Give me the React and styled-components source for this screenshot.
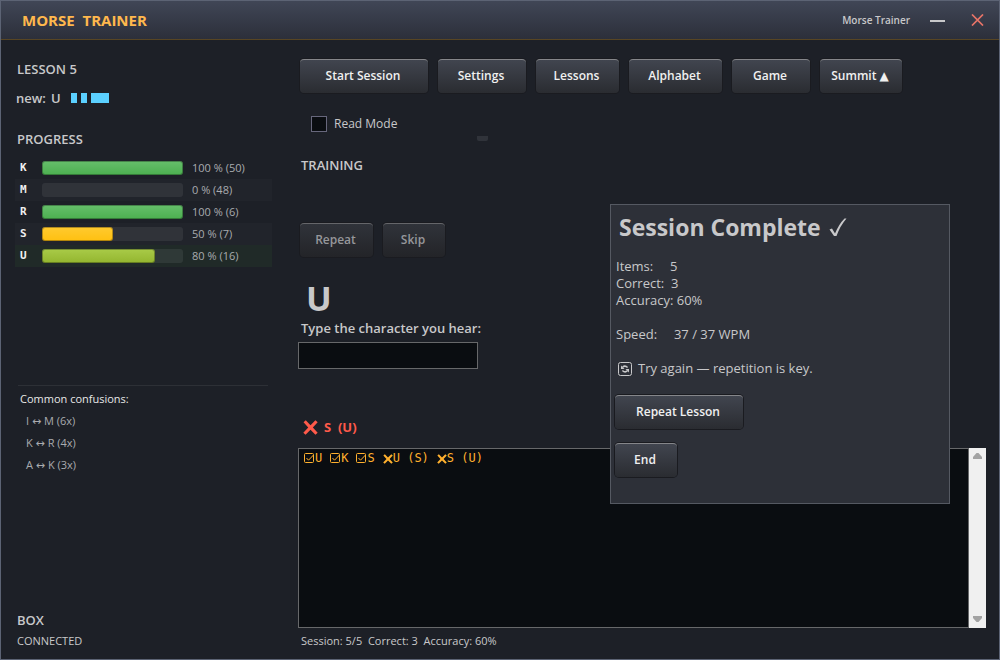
import React, { useState } from "react";
import styled, { createGlobalStyle } from "styled-components";

const GlobalStyle = createGlobalStyle`
  * {
    box-sizing: border-box;
  }

  body {
    margin: 0;
    background: #1d2027;
    color: #c8c8ca;
    font-family: "Open Sans", "DejaVu Sans", sans-serif;
    font-size: 12px;
    line-height: 16px;
  }

  button,
  input {
    font-family: inherit;
  }

  h1,
  h2,
  p,
  ul {
    margin: 0;
    padding: 0;
  }
`;

const Window = styled.div`
  display: flex;
  flex-direction: column;
  min-height: 100vh;
  border: 1px solid #5c6374;
`;

const TitleBar = styled.header`
  display: flex;
  align-items: center;
  height: 39px;
  padding: 0 15px 0 21px;
  background: linear-gradient(#404656, #2c2f3a);
  border-bottom: 1px solid #584523;
`;

const AppName = styled.h1`
  flex: 1;
  color: #ffb84d;
  font-size: 15px;
  line-height: 20px;
  font-weight: bold;
  white-space: pre;
`;

const WindowTitle = styled.span`
  font-size: 10px;
  font-weight: 600;
  margin-right: 20px;
`;

const WindowButton = styled.button`
  display: flex;
  padding: 0;
  border: 0;
  background: none;
  color: ${(props) => props.$color};
  margin-left: ${(props) => props.$gap || 0}px;
`;

const Body = styled.div`
  flex: 1;
  display: flex;
  gap: 26px;
  padding: 19px 13px 9px 14px;
`;

const Sidebar = styled.aside`
  display: flex;
  flex-direction: column;
  width: 257px;
`;

const Heading = styled.h2`
  padding-left: 2px;
  font-size: 13px;
  line-height: 20px;
  font-weight: 600;
`;

const NewChar = styled.p`
  display: flex;
  align-items: center;
  gap: 5px;
  margin: 9px 0 21px;
  padding-left: 1px;
  font-size: 13px;
  line-height: 20px;
  font-weight: 600;
`;

const MorseCode = styled.span`
  display: flex;
  gap: 4px;
  margin-left: 5px;
`;

const MorseMark = styled.span`
  width: ${(props) => (props.$dash ? 18 : 6)}px;
  height: 10px;
  background: #5bd0ff;
`;

const ProgressTable = styled.div`
  margin-top: 8px;
`;

const ProgressRow = styled.div`
  display: grid;
  grid-template-columns: 22px 141px 1fr;
  align-items: center;
  height: 22px;
  padding-left: 5px;
  background: ${(props) => props.$background};
`;

const Letter = styled.span`
  color: #f0f0f0;
  font-family: "DejaVu Sans Mono", monospace;
  font-size: 11px;
  font-weight: bold;
`;

const Track = styled.div`
  height: 14px;
  border-radius: 3px;
  background: rgba(255, 255, 255, 0.07);
`;

const Fill = styled.div`
  height: 100%;
  border: 1px solid rgba(0, 0, 0, 0.3);
  border-radius: 3px;
  background: ${(props) => props.$paint} border-box;
`;

const Percent = styled.span`
  padding-left: 9px;
  color: #a9abaf;
  font-size: 11px;
`;

const Confusions = styled.section`
  margin: 118px 4px 0 3px;
  padding-top: 5px;
  border-top: 1px solid #2d3036;
  color: #e8e8e8;
  font-size: 11px;
`;

const ConfusionTitle = styled.p`
  padding-left: 2px;
`;

const ConfusionList = styled.ul`
  margin-top: 3px;
  padding-left: 8px;
  list-style: none;
  color: #a9abaf;
  line-height: 22px;
`;

const Connection = styled.section`
  margin-top: auto;
`;

const ConnectionState = styled.p`
  margin-top: 2px;
  padding-left: 2px;
  font-size: 11px;
  line-height: 18px;
`;

const Main = styled.main`
  position: relative;
  flex: 1;
  display: flex;
  flex-direction: column;
`;

const ButtonRow = styled.div`
  display: flex;
  gap: 10px;
  padding-left: 2px;
`;

const Button = styled.button`
  width: ${(props) => props.$width}px;
  height: 34px;
  padding: 0 2px 2px 0;
  border: 0;
  border-top: 1px solid #85868a;
  border-radius: 4px;
  background: linear-gradient(#41454f, #2a2c31);
  box-shadow: 0 0 0 1px #1a1b20;
  color: #f0f0f0;
  font-size: 12px;
  line-height: 16px;
  font-weight: 600;
  white-space: nowrap;

  &:disabled {
    background: linear-gradient(#30333a, #232428);
    border-top-color: #65666a;
    color: #96979b;
  }
`;

const ReadMode = styled.label`
  display: flex;
  align-items: center;
  gap: 7px;
  margin-top: 23px;
  padding-left: 13px;
`;

const CheckBox = styled.input`
  appearance: none;
  width: 16px;
  height: 16px;
  margin: 0;
  border: 1px solid #67677c;
  background: #0a0d11;

  &:checked {
    box-shadow: inset 0 0 0 3px #0a0d11;
    background: #ffb84d;
  }
`;

const Grip = styled.div`
  width: 11px;
  height: 5px;
  margin: 4px 0 0 179px;
  border-radius: 0 0 2px 2px;
  background: #30333a;
`;

const Training = styled.section`
  margin-top: 14px;
`;

const TrainingHeading = styled(Heading)`
  padding-left: 3px;
  margin-bottom: 48px;
`;

const CurrentChar = styled.div`
  margin-top: 19px;
  padding-left: 8px;
  font-size: 34px;
  line-height: 44px;
  font-weight: bold;
`;

const AnswerLabel = styled.label`
  display: block;
  padding-left: 3px;
  font-size: 13px;
  line-height: 16px;
  font-weight: 600;
`;

const AnswerInput = styled.input`
  display: block;
  width: 180px;
  height: 27px;
  margin-top: 6px;
  padding: 0 6px;
  border: 1px solid #67686a;
  background: #0a0d11;
  color: #c8c8ca;
  font-size: 13px;
`;

const Feedback = styled.p`
  display: flex;
  align-items: center;
  gap: 6px;
  margin: 48px 0 11px;
  padding-left: 5px;
  color: #ff5a4a;
  font-size: 13px;
  line-height: 20px;
  font-weight: bold;
  white-space: pre;
`;

const LogFrame = styled.div`
  flex: 1;
  display: flex;
`;

const Log = styled.div`
  flex: 1;
  display: flex;
  align-items: flex-start;
  gap: 8px;
  padding: 1px 5px;
  border: 1px solid #67686a;
  background: #0a0d11;
  color: #ffb02e;
  font-family: "DejaVu Sans Mono", monospace;
  font-size: 12px;
  line-height: 17px;
`;

const LogEntry = styled.span`
  display: flex;
  align-items: center;
`;

const ScrollBar = styled.div`
  display: flex;
  flex-direction: column;
  justify-content: space-between;
  width: 17px;
  background: #f0f0f0;
`;

const ScrollButton = styled.button`
  display: flex;
  justify-content: center;
  align-items: center;
  height: 17px;
  padding: 0;
  border: 0;
  background: none;
`;

const StatusLine = styled.p`
  margin-top: 4px;
  padding-left: 3px;
  font-size: 11px;
  line-height: 18px;
  white-space: pre;
`;

const Dialog = styled.section`
  position: absolute;
  top: 145px;
  right: 36px;
  width: 340px;
  height: 300px;
  padding: 8px 4px;
  border: 1px solid #555962;
  background: #2d3038;
`;

const DialogTitle = styled.h2`
  display: flex;
  align-items: center;
  gap: 8px;
  padding-left: 4px;
  font-size: 23px;
  line-height: 28px;
  font-weight: bold;
`;

const Results = styled.div`
  margin-top: 17px;
  padding-left: 1px;
  font-size: 13px;
  line-height: 17px;
  white-space: pre;
`;

const Advice = styled.p`
  display: flex;
  align-items: center;
  gap: 6px;
  margin: 17px 0 18px;
  padding-left: 3px;
  font-size: 13px;
  line-height: 17px;
`;

const DialogButtons = styled.div`
  display: flex;
  flex-direction: column;
  gap: 14px;
`;

const GREEN = "linear-gradient(#66bf6b, #4caf50)";
const AMBER = "linear-gradient(#ffca30, #ffc010)";
const LIME = "linear-gradient(#a9cb48, #93b52f)";

const PROGRESS = [
  { letter: "K", percent: 100, count: 50, paint: GREEN },
  { letter: "M", percent: 0, count: 48, background: "#21242b" },
  { letter: "R", percent: 100, count: 6, paint: GREEN },
  { letter: "S", percent: 50, count: 7, paint: AMBER, background: "#21242b" },
  { letter: "U", percent: 80, count: 16, paint: LIME, background: "#202a28" },
];

const CONFUSIONS = ["I ↔ M (6x)", "K ↔ R (4x)", "A ↔ K (3x)"];

const MENU = [
  { label: "Start Session", width: 128 },
  { label: "Settings", width: 88 },
  { label: "Lessons", width: 83 },
  { label: "Alphabet", width: 93 },
  { label: "Game", width: 78 },
  { label: "Summit ▲", width: 82 },
];

const LOG = [
  { ok: true, text: "U" },
  { ok: true, text: "K" },
  { ok: true, text: "S" },
  { ok: false, text: "U (S)" },
  { ok: false, text: "S (U)" },
];

function CrossIcon({ size }) {
  return (
    <svg width={size} height={size} viewBox="0 0 14 14" fill="currentColor">
      <path d="M2.6 0.3 L7 4.8 L11.6 0.3 L13.7 2.2 L9.2 6.9 L13.7 11.8 L11.6 13.7 L7 9 L2.4 13.7 L0.3 11.8 L4.9 6.9 L0.5 2.2 Z" />
    </svg>
  );
}

function CheckedIcon() {
  return (
    <svg width="11" height="11" viewBox="0 0 11 11" fill="none" stroke="currentColor">
      <rect x="0.5" y="0.5" width="9" height="9" rx="1" />
      <path d="M2.5 5 L4.5 7.2 L9.5 2" />
    </svg>
  );
}

function RetryIcon() {
  return (
    <svg width="14" height="14" viewBox="0 0 14 14" fill="none" stroke="currentColor">
      <rect x="0.5" y="0.5" width="13" height="13" rx="2" />
      <path d="M4.6 5.2 Q7 2.9 9.6 5.6 M9.4 8.8 Q7 11.1 4.4 8.4" strokeWidth="1.5" />
      <path d="M3 3.5 V7 H6.5 Z M11 10.5 V7 H7.5 Z" fill="currentColor" stroke="none" />
    </svg>
  );
}

function Arrow({ down }) {
  return (
    <svg width="9" height="7" viewBox="0 0 9 7" fill="#a3a3a3">
      <path d={down ? "M0 0 H9 V2 L5.5 6 H3.5 L0 2 Z" : "M0 6 H9 V4 L5.5 0 H3.5 L0 4 Z"} />
    </svg>
  );
}

export default function App() {
  const [readMode, setReadMode] = useState(false);
  const [answer, setAnswer] = useState("");

  return (
    <>
      <GlobalStyle />
      <Window>
        <TitleBar>
          <AppName>{"MORSE  TRAINER"}</AppName>
          <WindowTitle>Morse Trainer</WindowTitle>
          <WindowButton $color="#c8c8ca" aria-label="Minimize">
            <svg width="15" height="14" viewBox="0 0 15 14">
              <path d="M0 8 H15" stroke="currentColor" strokeWidth="2" />
            </svg>
          </WindowButton>
          <WindowButton $color="#e87468" $gap={26} aria-label="Close">
            <svg width="13" height="12" viewBox="0 0 13 12">
              <path d="M1 0.5 L12 11.5 M12 0.5 L1 11.5" stroke="currentColor" strokeWidth="1.7" />
            </svg>
          </WindowButton>
        </TitleBar>

        <Body>
          <Sidebar>
            <Heading>LESSON 5</Heading>
            <NewChar>
              <span>new:</span>
              <span>U</span>
              <MorseCode>
                <MorseMark />
                <MorseMark />
                <MorseMark $dash />
              </MorseCode>
            </NewChar>

            <Heading>PROGRESS</Heading>
            <ProgressTable>
              {PROGRESS.map((item) => (
                <ProgressRow key={item.letter} $background={item.background}>
                  <Letter>{item.letter}</Letter>
                  <Track>
                    {item.percent > 0 && (
                      <Fill $paint={item.paint} style={{ width: `${item.percent}%` }} />
                    )}
                  </Track>
                  <Percent>
                    {item.percent} % ({item.count})
                  </Percent>
                </ProgressRow>
              ))}
            </ProgressTable>

            <Confusions>
              <ConfusionTitle>Common confusions:</ConfusionTitle>
              <ConfusionList>
                {CONFUSIONS.map((pair) => (
                  <li key={pair}>{pair}</li>
                ))}
              </ConfusionList>
            </Confusions>

            <Connection>
              <Heading>BOX</Heading>
              <ConnectionState>CONNECTED</ConnectionState>
            </Connection>
          </Sidebar>

          <Main>
            <ButtonRow>
              {MENU.map((item) => (
                <Button key={item.label} $width={item.width}>
                  {item.label}
                </Button>
              ))}
            </ButtonRow>
            <ReadMode>
              <CheckBox
                type="checkbox"
                checked={readMode}
                onChange={(e) => setReadMode(e.target.checked)}
              />
              Read Mode
            </ReadMode>
            <Grip />

            <Training>
              <TrainingHeading>TRAINING</TrainingHeading>
              <ButtonRow>
                <Button $width={73} disabled>
                  Repeat
                </Button>
                <Button $width={62} disabled>
                  Skip
                </Button>
              </ButtonRow>
              <CurrentChar>U</CurrentChar>
              <AnswerLabel htmlFor="answer">Type the character you hear:</AnswerLabel>
              <AnswerInput
                id="answer"
                type="text"
                value={answer}
                onChange={(e) => setAnswer(e.target.value)}
              />
              <Feedback>
                <CrossIcon size={15} />
                {"S  (U)"}
              </Feedback>
            </Training>

            <LogFrame>
              <Log role="log">
                {LOG.map((entry, index) => (
                  <LogEntry key={index}>
                    {entry.ok ? <CheckedIcon /> : <CrossIcon size={10} />}
                    {entry.text}
                  </LogEntry>
                ))}
              </Log>
              <ScrollBar>
                <ScrollButton aria-label="Scroll up">
                  <Arrow />
                </ScrollButton>
                <ScrollButton aria-label="Scroll down">
                  <Arrow down />
                </ScrollButton>
              </ScrollBar>
            </LogFrame>
            <StatusLine>{"Session: 5/5  Correct: 3  Accuracy: 60%"}</StatusLine>

            <Dialog role="dialog" aria-labelledby="dialog-title">
              <DialogTitle id="dialog-title">
                Session Complete
                <svg width="18" height="19" viewBox="0 0 18 19" fill="currentColor">
                  <path d="M0.5 11.5 L3 10.5 L6 15.5 Q10 6 15.5 0.5 L17.5 0.5 Q11 8 7.5 18 L5 18 Z" />
                </svg>
              </DialogTitle>
              <Results>
                <p>{"Items:     5"}</p>
                <p>{"Correct:  3"}</p>
                <p>Accuracy: 60%</p>
                <p> </p>
                <p>{"Speed:     37 / 37 WPM"}</p>
              </Results>
              <Advice>
                <RetryIcon />
                Try again — repetition is key.
              </Advice>
              <DialogButtons>
                <Button $width={128}>Repeat Lesson</Button>
                <Button $width={62}>End</Button>
              </DialogButtons>
            </Dialog>
          </Main>
        </Body>
      </Window>
    </>
  );
}
